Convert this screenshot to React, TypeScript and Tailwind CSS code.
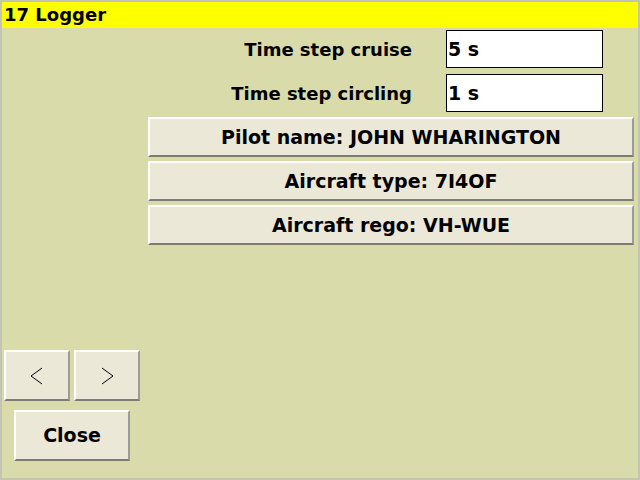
const font = { fontFamily: '"DejaVu Sans", sans-serif' };

function Btn({ children, className }: { children?: React.ReactNode; className?: string }) {
  return (
    <div
      className={
        "flex items-center justify-center bg-[#ebe8d8] border-t-2 border-l-2 border-t-white border-l-white border-b-2 border-r-2 border-b-[#7c7c74] border-r-[#9c9c94] font-bold text-[19px] text-black " +
        (className ?? "")
      }
    >
      {children}
    </div>
  );
}

function Chevron({ dir }: { dir: "left" | "right" }) {
  return (
    <svg width="16" height="20" viewBox="0 0 16 20">
      <polyline
        points={dir === "left" ? "13,2 2,10 13,18" : "3,2 14,10 3,18"}
        fill="none"
        stroke="black"
        strokeWidth="1"
      />
    </svg>
  );
}

export default function App() {
  return (
    <div className="w-[640px] h-[480px] bg-[#dadbab] border-2 border-[#c4c4b4] flex flex-col" style={font}>
      <div className="h-[26px] bg-[#ffff00] flex items-center pl-[2px] text-[18px] font-bold text-black leading-none">
        17 Logger
      </div>
      <div className="flex flex-1">
        <div className="w-[146px] flex flex-col justify-end pb-[17px]">
          <div className="flex gap-[4px] pl-[2px]">
            <Btn className="w-[66px] h-[51px]">
              <Chevron dir="left" />
            </Btn>
            <Btn className="w-[66px] h-[51px]">
              <Chevron dir="right" />
            </Btn>
          </div>
          <div className="pl-[12px] mt-[9px]">
            <Btn className="w-[116px] h-[51px]">Close</Btn>
          </div>
        </div>
        <div className="flex-1 flex flex-col pt-[2px] pr-[4px]">
          <div className="flex items-center h-[38px]">
            <div className="flex-1 text-right pr-[34px] font-bold text-[18px]">Time step cruise</div>
            <div className="w-[157px] h-[38px] bg-white border border-black flex items-center pl-[1px] font-bold text-[19px] mr-[31px]">5 s</div>
          </div>
          <div className="flex items-center h-[38px] mt-[6px]">
            <div className="flex-1 text-right pr-[34px] font-bold text-[18px]">Time step circling</div>
            <div className="w-[157px] h-[38px] bg-white border border-black flex items-center pl-[1px] font-bold text-[19px] mr-[31px]">1 s</div>
          </div>
          <div className="flex flex-col gap-[4px] mt-[5px]">
            <Btn className="h-[40px]">Pilot name: JOHN WHARINGTON</Btn>
            <Btn className="h-[40px]">Aircraft type: 7I4OF</Btn>
            <Btn className="h-[40px]">Aircraft rego: VH-WUE</Btn>
          </div>
        </div>
      </div>
    </div>
  );
}
